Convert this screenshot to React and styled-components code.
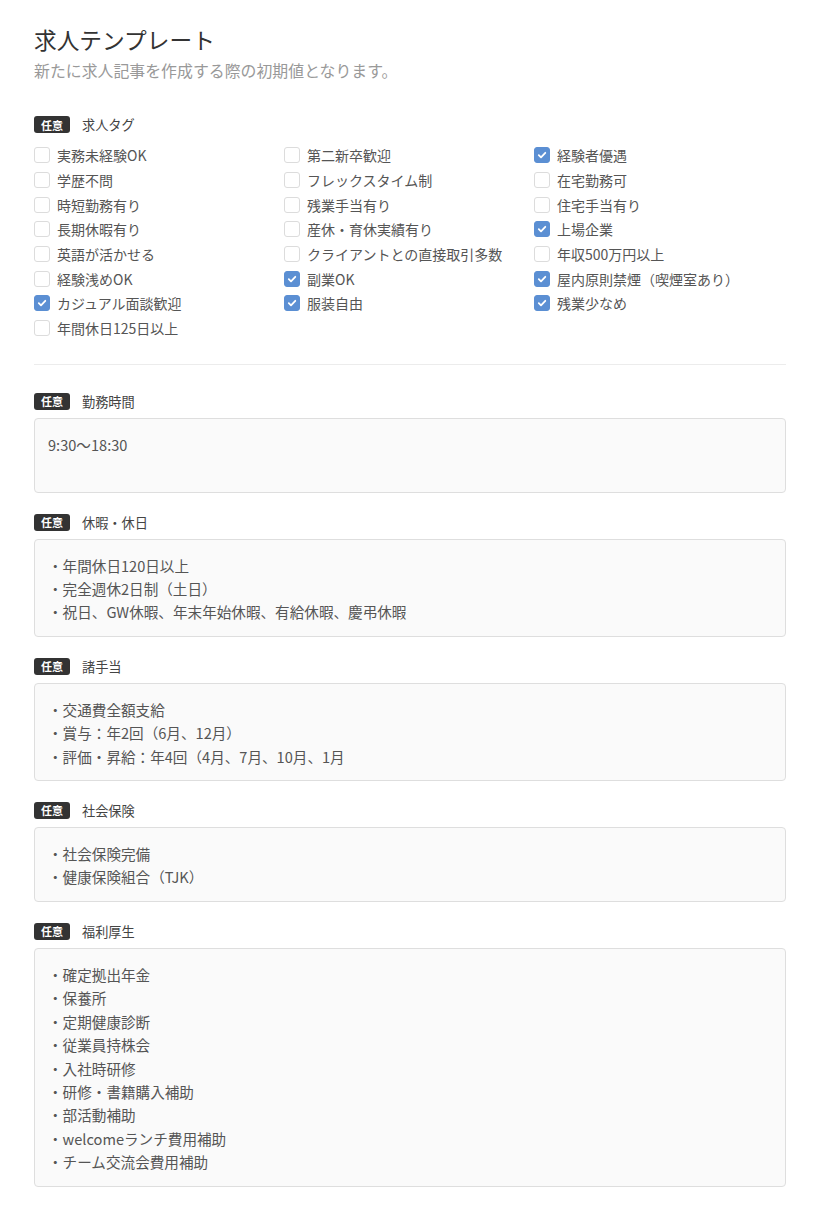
import React from "react";
import styled, { createGlobalStyle } from "styled-components";

const GlobalStyle = createGlobalStyle`
  body {
    margin: 0;
    background: #fff;
    font-family: "Noto Sans CJK JP", "Noto Sans", sans-serif;
    color: #555;
  }
`;

const Page = styled.div`
  width: 752px;
  padding: 25px 0 30px 34px;
`;

const Title = styled.h1`
  margin: 0;
  font-size: 22.7px;
  font-weight: 400;
  line-height: 30px;
  color: #333;
`;

const Lead = styled.p`
  margin: 5px 0 0;
  font-size: 15.9px;
  line-height: 22px;
  color: #999;
`;

const Section = styled.section`
  margin-top: ${(p) => p.$top}px;
`;

const Head = styled.div`
  display: flex;
  align-items: center;
  gap: 12px;
  height: 17px;
`;

const Badge = styled.span`
  display: inline-flex;
  align-items: center;
  justify-content: center;
  width: 36px;
  height: 17px;
  border-radius: 3px;
  background: #333;
  color: #fff;
  font-size: 11px;
  font-weight: 700;
`;

const Label = styled.span`
  font-size: 13.2px;
  color: #444;
`;

const Grid = styled.div`
  display: grid;
  grid-template-columns: 250px 250px 250px;
  margin-top: 10px;
`;

const Item = styled.label`
  display: flex;
  align-items: center;
  gap: 7px;
  height: 24.7px;
  font-size: 14px;
  color: #555;
`;

const Box = styled.span`
  box-sizing: border-box;
  width: 16px;
  height: 16px;
  border-radius: 3px;
  border: 1px solid ${(p) => (p.$on ? "#5b8fd3" : "#dcdcdc")};
  background: ${(p) => (p.$on ? "#5b8fd3" : "#fff")};
  display: flex;
  align-items: center;
  justify-content: center;
`;

const Divider = styled.hr`
  border: 0;
  border-top: 1px solid #ececec;
  margin: 23px 0 0;
`;

const Field = styled.div`
  box-sizing: border-box;
  margin-top: 8px;
  min-height: 75px;
  padding: 14px 13px 12px;
  border: 1px solid #dedede;
  border-radius: 4px;
  background: #fafafa;
  font-size: 14.6px;
  line-height: 23.4px;
  color: #555;
  white-space: pre-wrap;
`;

const tags = [
  ["実務未経験OK", false], ["第二新卒歓迎", false], ["経験者優遇", true],
  ["学歴不問", false], ["フレックスタイム制", false], ["在宅勤務可", false],
  ["時短勤務有り", false], ["残業手当有り", false], ["住宅手当有り", false],
  ["長期休暇有り", false], ["産休・育休実績有り", false], ["上場企業", true],
  ["英語が活かせる", false], ["クライアントとの直接取引多数", false], ["年収500万円以上", false],
  ["経験浅めOK", false], ["副業OK", true], ["屋内原則禁煙（喫煙室あり）", true],
  ["カジュアル面談歓迎", true], ["服装自由", true], ["残業少なめ", true],
  ["年間休日125日以上", false],
];

const fields = [
  ["勤務時間", ["9:30〜18:30"]],
  ["休暇・休日", ["・年間休日120日以上", "・完全週休2日制（土日）", "・祝日、GW休暇、年末年始休暇、有給休暇、慶弔休暇"]],
  ["諸手当", ["・交通費全額支給", "・賞与：年2回（6月、12月）", "・評価・昇給：年4回（4月、7月、10月、1月"]],
  ["社会保険", ["・社会保険完備", "・健康保険組合（TJK）"]],
  ["福利厚生", [
    "・確定拠出年金", "・保養所", "・定期健康診断", "・従業員持株会", "・入社時研修",
    "・研修・書籍購入補助", "・部活動補助", "・welcomeランチ費用補助", "・チーム交流会費用補助",
  ]],
];

function Check({ on }) {
  return (
    <Box $on={on}>
      {on && (
        <svg width="10" height="10" viewBox="0 0 10 10">
          <path d="M1.8 5.2 L4 7.3 L8.3 2.8" fill="none" stroke="#fff" strokeWidth="1.8" strokeLinecap="round" strokeLinejoin="round" />
        </svg>
      )}
    </Box>
  );
}

export default function App() {
  return (
    <Page>
      <GlobalStyle />
      <Title>求人テンプレート</Title>
      <Lead>新たに求人記事を作成する際の初期値となります。</Lead>

      <Section $top={34}>
        <Head>
          <Badge>任意</Badge>
          <Label>求人タグ</Label>
        </Head>
        <Grid>
          {tags.map(([name, on]) => (
            <Item key={name}>
              <Check on={on} />
              {name}
            </Item>
          ))}
        </Grid>
      </Section>

      <Divider />

      {fields.map(([name, lines], i) => (
        <Section key={name} $top={i === 0 ? 28 : 21}>
          <Head>
            <Badge>任意</Badge>
            <Label>{name}</Label>
          </Head>
          <Field>{lines.join("\n")}</Field>
        </Section>
      ))}
    </Page>
  );
}
